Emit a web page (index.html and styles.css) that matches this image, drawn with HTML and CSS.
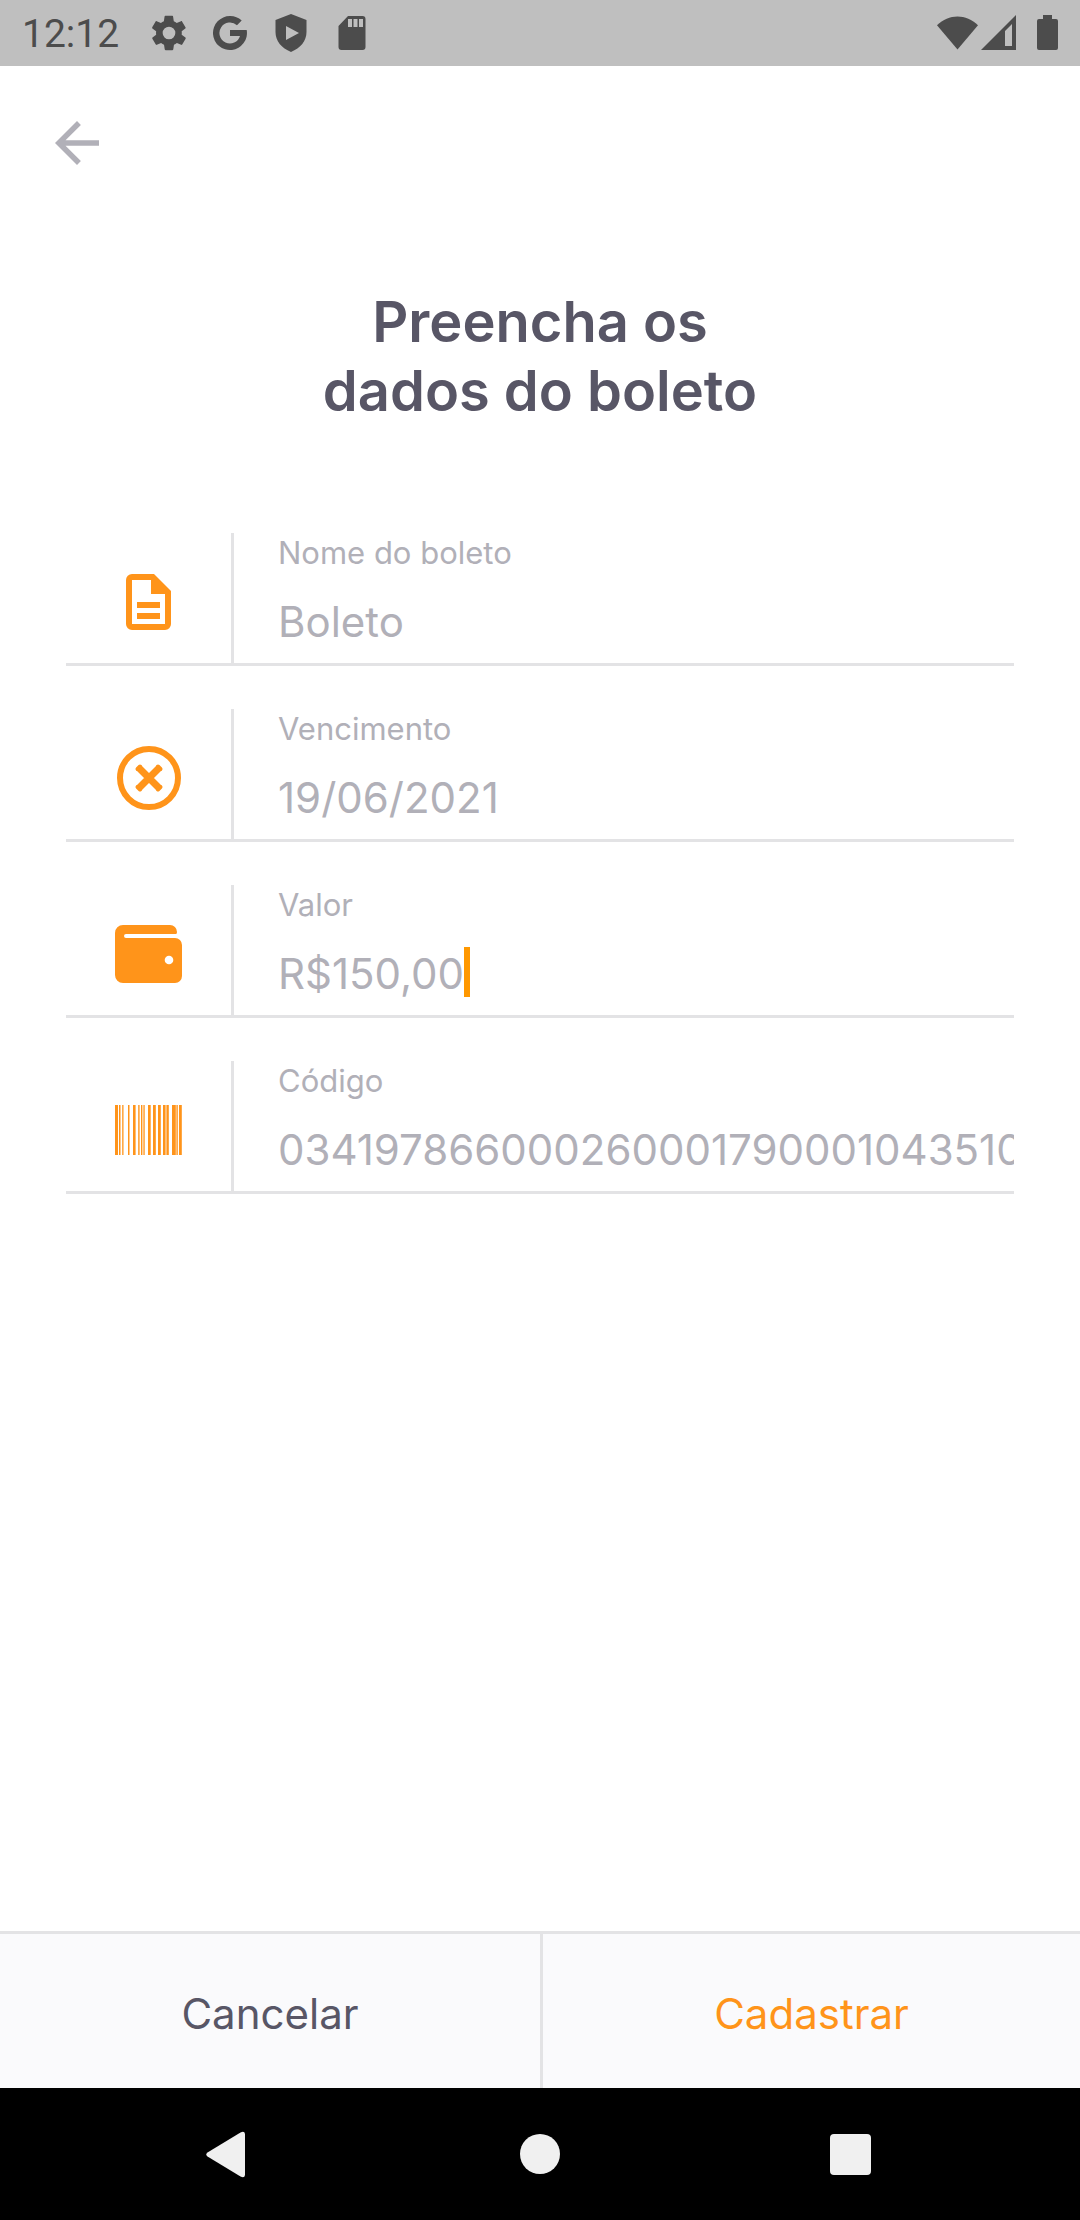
FILE: index.html
```html
<!DOCTYPE html>
<html lang="pt-BR">
<head>
<meta charset="utf-8">
<meta name="viewport" content="width=device-width, initial-scale=1">
<title>Preencha os dados do boleto</title>
<link rel="stylesheet" href="styles.css">
</head>
<body>
<div class="screen">
  <header class="status">
    <div class="status-group">
      <time class="clock">12:12</time>
      <svg class="status-icon" viewBox="1.500 1.500 21 21" aria-hidden="true"><path d="M19.4 13a7.500 7.500 0 0 0 0-2l2.100-1.600c.2-.2.3-.4.1-.7l-2-3.400c-.1-.2-.4-.3-.6-.2l-2.500 1a7.300 7.300 0 0 0-1.700-1l-.4-2.600c0-.3-.2-.5-.5-.5h-4c-.3 0-.5.2-.5.5L9 5.100c-.6.200-1.200.600-1.700 1l-2.500-1c-.2-.1-.5 0-.6.200l-2 3.400c-.1.300 0 .5.100.7L4.500 11a7.900 7.900 0 0 0 0 2l-2.100 1.600c-.2.200-.3.400-.1.700l2 3.400c.1.200.4.300.6.200l2.500-1c.5.400 1.100.700 1.700 1l.4 2.600c0 .3.200.5.500.5h4c.3 0 .5-.2.500-.5l.4-2.600c.6-.2 1.200-.6 1.700-1l2.500 1c.2.100.5 0 .6-.2l2-3.400c.1-.3.100-.5-.1-.7zM12 15.700a3.700 3.700 0 1 1 0-7.400 3.700 3.700 0 0 1 0 7.400z"/></svg>
      <svg class="status-icon" viewBox="0 0 36 36" aria-hidden="true"><path d="M18 1a17 17 0 0 1 11.700 4.500L25 10.200A10.500 10.500 0 1 0 28 21H18V15h16.700A17 17 0 1 1 18 1z"/></svg>
      <svg class="status-icon" viewBox="0 0 36 40" aria-hidden="true"><path fill-rule="evenodd" d="M18 1 33.500 7v12c0 9-6 16-15.500 20C8.500 35 2.500 28 2.500 19V7zM13 13v14l13-7z"/></svg>
      <svg class="status-icon" viewBox="0 0 36 36" aria-hidden="true"><path fill-rule="evenodd" d="M14 1h14.500a3 3 0 0 1 3 3v28a3 3 0 0 1-3 3h-21a3 3 0 0 1-3-3V11zM14 4v8h4V4zm5.500 0v8h4V4zM25 4v8h4V4z"/></svg>
    </div>
    <div class="status-group status-right">
      <svg class="wifi" viewBox="0 0 42 36" aria-hidden="true"><path d="M0 10C12-2 30-2 42 10L21 35z"/></svg>
      <svg class="signal" viewBox="0 0 36 36" aria-hidden="true"><path fill-rule="evenodd" d="M35 0v35H0zM24 16v15h7V9z"/></svg>
      <svg class="battery" viewBox="0 0 21 36" aria-hidden="true"><path d="M6 0h9v4h4a2 2 0 0 1 2 2v27a2 2 0 0 1-2 2H2a2 2 0 0 1-2-2V6a2 2 0 0 1 2-2h4z"/></svg>
    </div>
  </header>

  <nav class="topbar">
    <button class="back" type="button" aria-label="Voltar">
      <svg viewBox="0 0 24 24" aria-hidden="true"><path d="M20 11H7.830l5.590-5.590L12 4l-8 8 8 8 1.410-1.410L7.830 13H20v-2z"/></svg>
    </button>
  </nav>

  <main class="main">
    <h1 class="title">Preencha os<br>dados do boleto</h1>
    <form class="form" id="boleto">
      <div class="field">
        <span class="field-icon"><svg width="45" height="56" viewBox="0 0 45 56" aria-hidden="true"><path fill-rule="evenodd" d="M6 0H28L45 17V50a6 6 0 0 1-6 6H6a6 6 0 0 1-6-6V6a6 6 0 0 1 6-6zM6 6V50H39V20H25V6zM11 28H34V34H11zM11 39H34V45H11z"/></svg></span>
        <div class="field-body">
          <label class="label" for="nome">Nome do boleto</label>
          <input class="value" id="nome" type="text" value="Boleto">
        </div>
      </div>
      <div class="field">
        <span class="field-icon"><svg width="66" height="66" viewBox="0 0 66 66" aria-hidden="true"><circle cx="33" cy="33" r="29" fill="none" stroke="#ff941a" stroke-width="6"/><path d="M22.500 22.500 43.500 43.500M43.500 22.500 22.500 43.500" fill="none" stroke="#ff941a" stroke-width="7"/><path d="M21.500 24 24 21.500M42 21.500 44.500 24M44.500 42 42 44.500M24 44.500 21.500 42" fill="none" stroke="#ff941a" stroke-width="4" stroke-linecap="round"/></svg></span>
        <div class="field-body">
          <label class="label" for="vencimento">Vencimento</label>
          <input class="value" id="vencimento" type="text" value="19/06/2021">
        </div>
      </div>
      <div class="field">
        <span class="field-icon"><svg width="67" height="58" viewBox="0 0 67 58" aria-hidden="true"><path d="M8 0H55a7 7 0 0 1 7 7q0 2-1 2H11a2 2 0 0 0 0 4H60a7 7 0 0 1 7 7V51a7 7 0 0 1-7 7H8a8 8 0 0 1-8-8V8a8 8 0 0 1 8-8z"/><circle cx="54" cy="35" r="4.300" fill="#fff"/></svg></span>
        <div class="field-body">
          <label class="label" for="valor">Valor</label>
          <div class="value-row">
            <input class="value value-fit" id="valor" type="text" value="R$150,00">
            <span class="caret"></span>
          </div>
        </div>
      </div>
      <div class="field">
        <span class="field-icon"><svg width="67" height="50" viewBox="0 0 67 50" aria-hidden="true"><path d="M0 0h3v50H0zM4 0h1.500v50H4zM7.200 0h1.300v50H7.200zM13 0h1.500v50H13zM18 0h2.600v50H18zM23.200 0h1.400v50h-1.400zM26 0h1.400v50H26zM28.400 0h1.300v50h-1.300zM33 0h2.700v50H33zM38 0h2.800v50H38zM43 0h2.800v50H43zM48 0h2.600v50H48zM51.400 0h2.400v50h-2.400zM57 0h3.800v50H57zM61.400 0h1.400v50h-1.400zM64 0h2.800v50H64z"/></svg></span>
        <div class="field-body">
          <label class="label" for="codigo">Código</label>
          <input class="value" id="codigo" type="text" value="034197866000260001790001043510">
        </div>
      </div>
    </form>
  </main>

  <footer class="actions">
    <button class="action" type="button">Cancelar</button>
    <button class="action action-primary" type="submit" form="boleto">Cadastrar</button>
  </footer>

  <nav class="sysnav">
    <button class="sys" type="button" aria-label="Voltar"><svg viewBox="0 0 48 48" aria-hidden="true"><path d="M34.500 2.500q4-2 4.500 1.500v41q-.5 3.500-4.500 1.500L1.500 26.500q-2.500-2 0-4z"/></svg></button>
    <button class="sys" type="button" aria-label="Início"><svg viewBox="0 0 48 48" aria-hidden="true"><circle cx="24" cy="24" r="20"/></svg></button>
    <button class="sys" type="button" aria-label="Recentes"><svg viewBox="0 0 48 48" aria-hidden="true"><rect x="4" y="4" width="41" height="41" rx="4"/></svg></button>
  </nav>
</div>
</body>
</html>
```
FILE: styles.css
```css
* {
  box-sizing: border-box;
}

body {
  margin: 0;
  background: #fff;
  font-family: Inter, "Liberation Sans", sans-serif;
  color: #585666;
}

button,
input {
  margin: 0;
  padding: 0;
  border: 0;
  background: none;
  font: inherit;
  color: inherit;
}

svg {
  display: block;
}

.screen {
  display: flex;
  flex-direction: column;
  min-height: 100vh;
}

.status {
  display: flex;
  justify-content: space-between;
  align-items: center;
  height: 66px;
  padding: 0 22px;
  background: #bfbfbf;
  color: #4c4c4c;
  fill: #4c4c4c;
}

.status-group {
  display: flex;
  align-items: center;
  gap: 25px;
}

.clock {
  width: 104px;
  padding-top: 2px;
  font-family: Roboto, sans-serif;
  font-size: 39px;
  line-height: 64px;
}

.status-icon {
  width: 36px;
  height: 40px;
}

.status-right {
  gap: 3px;
}

.wifi {
  width: 41px;
  height: 36px;
}

.signal {
  width: 36px;
  height: 36px;
}

.battery {
  width: 21px;
  height: 36px;
  margin-left: 17px;
}

.topbar {
  padding: 44px 44px 0;
}

.back {
  display: block;
  width: 66px;
  height: 66px;
  fill: #b1b0b8;
}

.main {
  flex: 1;
  padding: 112px 66px 0;
}

.title {
  margin: 0 0 107px;
  font-size: 56px;
  font-weight: 600;
  line-height: 69px;
  text-align: center;
}

.form {
  display: grid;
  gap: 43px;
}

.field {
  display: flex;
  height: 133px;
  border-bottom: 3px solid #e3e3e5;
}

.field-icon {
  display: grid;
  place-items: center;
  flex: none;
  width: 168px;
  padding-top: 7px;
  border-right: 3px solid #e3e3e5;
  fill: #ff941a;
}

.field-body {
  flex: 1;
  min-width: 0;
  padding-left: 44px;
  color: #b1b0b8;
}

.label {
  display: block;
  font-size: 31px;
  line-height: 40px;
}

.value {
  display: block;
  width: 100%;
  height: 50px;
  margin-top: 24px;
  font-size: 42px;
  line-height: 50px;
  outline: 0;
}

.value-row {
  display: flex;
}

.value-fit {
  width: auto;
  field-sizing: content;
}

.caret {
  width: 6px;
  height: 50px;
  margin-top: 22px;
  background: #ff9800;
}

.actions {
  display: grid;
  grid-template-columns: 1fr 1fr;
  height: 157px;
  border-top: 3px solid #e3e3e5;
  background: #fafafc;
  font-size: 42px;
}

.action {
  padding-top: 4px;
}

.action-primary {
  border-left: 3px solid #e3e3e5;
  color: #ff941a;
}

.sysnav {
  display: flex;
  justify-content: center;
  align-items: center;
  gap: 262px;
  height: 132px;
  background: #000;
  fill: #f0f0f0;
}

.sys {
  width: 48px;
  height: 48px;
}
```
